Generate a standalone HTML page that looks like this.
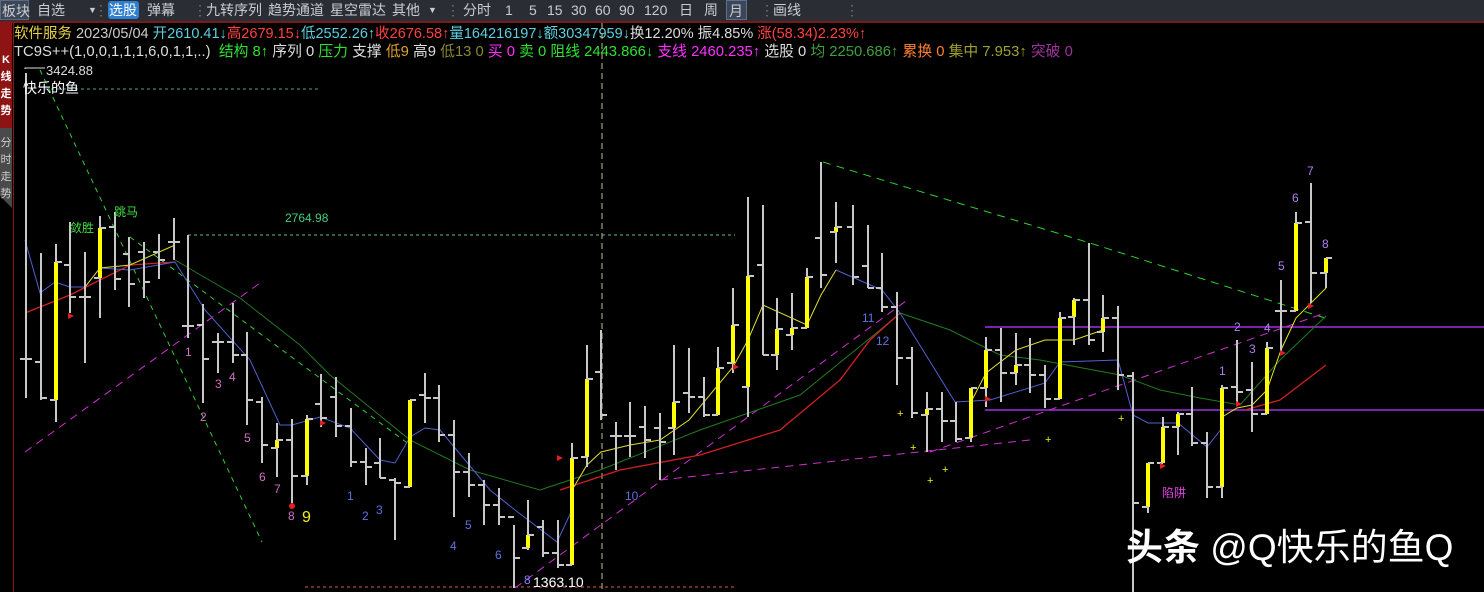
<!DOCTYPE html>
<html><head><meta charset="utf-8"><style>
*{margin:0;padding:0}
body{width:1484px;height:592px;background:#000;overflow:hidden;position:relative;font-family:"Liberation Sans","Noto Sans CJK SC",sans-serif}
#top{position:absolute;left:0;top:0;width:1484px;height:21px;background:#2a2d33;color:#c9ccd2;font-size:14px;line-height:20px}
#top span{position:absolute;top:0;white-space:nowrap}
.sep{color:#777}
#redl{position:absolute;left:0;top:21px;width:1484px;height:2px;background:#7a1a1a}
.info{position:absolute;left:14px;white-space:nowrap;line-height:17px}
svg{position:absolute;left:0;top:0}
#wm{position:absolute;left:1126px;top:526px;color:#fff;font-size:37px;white-space:nowrap;line-height:44px;font-family:"Liberation Sans","Noto Sans CJK SC",sans-serif}
</style></head><body>
<div id="top">
<span style="left:0;width:29px;height:20px;background:#3c4656;border:1px solid #5a6a80;box-sizing:border-box;padding-left:1px">板块</span>
<span style="left:37px">自选</span><span style="left:88px;font-size:9px">▼</span><span class="sep" style="left:94px">⋮</span>
<span style="left:108px;top:1px;width:30px;height:18px;background:#2f7fd0;color:#fff;border-radius:3px;line-height:18px;padding-left:1px">选股</span>
<span style="left:147px">弹幕</span><span class="sep" style="left:193px">⋮</span>
<span style="left:206px">九转序列</span><span style="left:268px">趋势通道</span><span style="left:330px">星空雷达</span><span style="left:392px">其他</span><span style="left:428px;font-size:9px">▼</span><span class="sep" style="left:446px">⋮</span>
<span style="left:463px">分时</span><span style="left:505px">1</span><span style="left:529px">5</span><span style="left:547px">15</span><span style="left:571px">30</span><span style="left:595px">60</span><span style="left:619px">90</span><span style="left:644px">120</span><span style="left:679px">日</span><span style="left:704px">周</span>
<span style="left:726px;width:21px;height:20px;background:#3c4656;border:1px solid #5a7090;box-sizing:border-box;padding-left:2px">月</span>
<span class="sep" style="left:760px">⋮</span><span style="left:773px">画线</span><span class="sep" style="left:845px">⋮</span>
</div>
<div id="redl"></div>
<div style="position:absolute;left:0;top:23px;width:12px;height:105px;background:#8e1414"></div>
<div style="position:absolute;left:0;top:128px;width:12px;height:80px;background:#4a4a4a;clip-path:polygon(0 0,100% 0,100% 100%,0 85%)"></div>
<div style="position:absolute;left:0;top:52px;width:12px;color:#fff;font-size:11px;line-height:17px;text-align:center;font-weight:bold">K<br>线<br>走<br>势</div>
<div style="position:absolute;left:0;top:135px;width:12px;color:#ccc;font-size:11px;line-height:17px;text-align:center">分<br>时<br>走<br>势</div>
<div style="position:absolute;left:13px;top:23px;width:1px;height:569px;background:#8e1414"></div>
<div class="info" style="top:26px;font-size:14.5px"><span style="color:#e8d040">软件服务</span> <span style="color:#ccc">2023/05/04</span> <span style="color:#5cd0e0">开2610.41↓</span><span style="color:#ff4040">高2679.15↓</span><span style="color:#5cd0e0">低2552.26↑</span><span style="color:#ff4040">收2676.58↑</span><span style="color:#5cd0e0">量164216197↓额30347959↓</span><span style="color:#ddd">换12.20% 振4.85% </span><span style="color:#ff4040">涨(58.34)2.23%↑</span></div>
<div class="info" style="top:44px;font-size:14.8px"><span style="color:#ddd">TC9S++(1,0,0,1,1,1,6,0,1,1,..)</span> <span style="color:#30e030">&nbsp;结构 8↑</span> <span style="color:#ddd">序列 0</span> <span style="color:#30e030">压力</span> <span style="color:#ddd">支撑</span> <span style="color:#e0a030">低9</span> <span style="color:#ddd">高9</span> <span style="color:#888830">低13 0</span> <span style="color:#ff30ff">买 0</span> <span style="color:#30e030">卖 0</span> <span style="color:#30e030">阻线 2443.866↓</span> <span style="color:#ff30ff">支线 2460.235↑</span> <span style="color:#ddd">选股 0</span> <span style="color:#40a040">均 2250.686↑</span> <span style="color:#ff8030">累换 0</span> <span style="color:#a0a030">集中 7.953↑</span> <span style="color:#a030a0">突破 0</span></div>
<svg id="ch" width="1484" height="592" xmlns="http://www.w3.org/2000/svg">
<g fill="none" stroke-width="1">
<line x1="602" y1="23" x2="602" y2="592" stroke="#c8c090" stroke-dasharray="6,4"/>
<line x1="45" y1="89" x2="320" y2="89" stroke="#4aa0a0" stroke-dasharray="3,3"/>
<line x1="188" y1="235" x2="735" y2="235" stroke="#60c080" stroke-dasharray="3,3"/>
<line x1="305" y1="587" x2="735" y2="587" stroke="#d06040" stroke-dasharray="3,3"/>
<line x1="985" y1="327" x2="1484" y2="327" stroke="#a030e0" stroke-width="1.5"/>
<line x1="985" y1="410" x2="1484" y2="410" stroke="#a030e0" stroke-width="1.5"/>
<polyline points="823,162 1090,243 1325,318" stroke="#30d030" stroke-dasharray="8,6"/>
<line x1="40" y1="70" x2="262" y2="542" stroke="#30d030" stroke-dasharray="5,5"/>
<line x1="130" y1="237" x2="410" y2="445" stroke="#30d030" stroke-dasharray="5,5"/>
<line x1="25" y1="452" x2="260" y2="283" stroke="#d030d0" stroke-dasharray="8,6"/>
<line x1="515" y1="588" x2="910" y2="298" stroke="#d030d0" stroke-dasharray="8,6"/>
<line x1="660" y1="480" x2="1030" y2="440" stroke="#d030d0" stroke-dasharray="8,6"/>
<line x1="930" y1="452" x2="1325" y2="313" stroke="#d030d0" stroke-dasharray="8,6"/>
<polyline points="175,260 240,298 300,345 330,375 410,440 470,470 540,490 600,470 700,430 800,395 880,330 900,313 950,330 1000,355 1040,360 1120,375 1160,390 1200,398 1240,405 1280,360 1326,316" stroke="#227a22"/>
<polyline points="25,313 70,295 130,265 175,262" stroke="#d02020" stroke-width="1.3"/>
<polyline points="560,490 620,470 700,455 780,430 840,380 870,340 900,313" stroke="#d02020" stroke-width="1.3"/>
<polyline points="1245,410 1280,400 1326,365" stroke="#d02020" stroke-width="1.3"/>
<polyline points="25,240 40,293 55,282 70,287 85,287 100,268 130,270 175,262 205,310 250,360 280,425 292,425 320,417 350,428 380,460 395,463 410,437 425,428 440,430 490,490 515,510 557,542 572,510" stroke="#5060d0"/>
<polyline points="836,270 882,290 900,313 955,402 990,400 1045,383 1060,362 1118,360 1133,415 1148,423 1178,423 1207,447 1222,428" stroke="#5060d0"/>
<polyline points="85,287 100,268 130,265 175,245" stroke="#e0e030"/>
<polyline points="572,490 587,465 601,452 630,445 660,440 689,420 733,367 748,340 763,305 807,325 821,295 836,270" stroke="#e0e030"/>
<polyline points="971,402 986,373 1016,350 1045,340 1074,340 1103,330" stroke="#e0e030"/>
<polyline points="1222,417 1237,408 1252,405 1267,390 1281,350 1296,318 1326,288" stroke="#e0e030"/>
<polyline points="25,69 25,68 45,68" stroke="#ddd"/>
</g>
<g id="bars"></g>
<g font-family="Liberation Sans" font-size="12">
<text x="46" y="75" fill="#ddd" font-size="13">3424.88</text>
<text x="23" y="93" fill="#fff" font-size="14" font-family="Noto Sans CJK SC">快乐的鱼</text>
<text x="285" y="222" fill="#40d080" font-size="12">2764.98</text>
<text x="533" y="587" fill="#fff" font-size="14">1363.10</text>
<text x="524" y="584" fill="#8080ff">8</text>
<text x="70" y="232" fill="#40e040" font-family="Noto Sans CJK SC">敛胜</text>
<text x="114" y="216" fill="#40e040" font-family="Noto Sans CJK SC">跳马</text>
<text x="1162" y="497" fill="#e040e0" font-family="Noto Sans CJK SC">陷阱</text>
<g fill="#d070c0"><text x="185" y="356">1</text><text x="200" y="421">2</text><text x="215" y="388">3</text><text x="229" y="381">4</text><text x="244" y="442">5</text><text x="259" y="481">6</text><text x="274" y="493">7</text><text x="288" y="520">8</text></g>
<text x="302" y="522" fill="#f0f020" font-size="16">9</text>
<g fill="#6070e0"><text x="347" y="500">1</text><text x="362" y="520">2</text><text x="376" y="514">3</text><text x="450" y="550">4</text><text x="465" y="529">5</text><text x="495" y="559">6</text><text x="625" y="500">10</text><text x="862" y="322">11</text><text x="876" y="345">12</text></g>
<g fill="#b080f0"><text x="1219" y="375">1</text><text x="1234" y="331">2</text><text x="1249" y="353">3</text><text x="1264" y="332">4</text><text x="1278" y="270">5</text><text x="1292" y="202">6</text><text x="1307" y="175">7</text><text x="1322" y="248">8</text></g>
<g fill="#f0f020" font-size="11"><text x="897" y="417">+</text><text x="910" y="451">+</text><text x="927" y="484">+</text><text x="942" y="473">+</text><text x="1045" y="443">+</text><text x="1118" y="422">+</text></g>
<circle cx="292" cy="506" r="3" fill="#e02020"/>
<g fill="#e02020"><path d="M68,313 l6,3 l-6,3z"/><path d="M320,420 l6,3 l-6,3z"/><path d="M557,455 l6,3 l-6,3z"/><path d="M733,364 l6,3 l-6,3z"/><path d="M985,396 l6,3 l-6,3z"/><path d="M1160,463 l6,3 l-6,3z"/><path d="M1236,401 l6,3 l-6,3z"/><path d="M1280,350 l6,3 l-6,3z"/><path d="M1308,303 l6,3 l-6,3z"/></g>
</g>
</svg>
<div id="wm"><b>头条</b> @Q快乐的鱼Q</div>
<script>
var B=[[26,73,398,359,359],[41,253,400,362,398],[56,244,422,400,262],[70,222,313,265,297],[85,252,363,297,297],[100,216,318,278,228],[115,212,290,227,279],[129,237,307,254,284],[144,242,298,252,282],[159,234,279,252,260],[174,218,260,242,242],[188,235,338,326,326],[203,304,403,325,359],[218,333,373,342,342],[233,303,363,342,355],[247,332,425,355,400],[262,397,463,402,445],[277,423,477,448,440],[292,419,503,440,476],[307,415,485,476,419],[321,374,427,404,418],[336,377,437,397,426],[351,408,467,426,462],[366,448,485,462,467],[380,438,478,463,478],[395,478,540,480,483],[410,400,487,487,400],[425,373,423,395,398],[439,385,442,398,435],[454,420,517,435,472],[469,453,497,472,485],[484,480,525,485,505],[499,488,525,505,517],[514,525,588,517,558],[528,500,550,548,535],[543,520,557,527,553],[558,520,568,553,565],[572,443,565,565,458],[587,345,467,457,379],[601,330,420,372,415],[616,422,470,436,436],[630,402,457,436,436],[645,406,458,427,440],[660,413,480,428,442],[674,345,455,428,402],[689,348,413,393,397],[704,377,417,397,415],[718,347,415,415,368],[733,288,373,363,325],[748,197,417,387,276],[763,205,355,265,355],[777,298,370,355,329],[792,293,350,335,328],[807,268,328,328,277],[821,162,288,238,275],[836,202,263,232,227],[853,205,285,227,277],[868,225,288,266,288],[882,253,312,288,307],[897,292,385,307,358],[912,347,418,358,413],[927,392,452,415,409],[942,392,442,409,421],[956,402,442,421,439],[971,388,442,438,388],[986,337,407,388,350],[1001,328,402,350,373],[1016,333,385,373,365],[1030,338,393,365,375],[1045,365,408,375,399],[1060,312,399,399,318],[1074,298,345,317,300],[1089,243,345,300,340],[1103,295,352,332,318],[1118,306,390,318,375],[1133,372,592,376,503],[1148,463,513,507,463],[1163,417,463,463,427],[1178,412,455,427,414],[1192,387,446,414,443],[1207,432,498,443,487],[1222,385,498,487,388],[1237,340,405,387,392],[1252,362,432,390,414],[1267,342,414,414,348],[1281,280,353,311,311],[1296,212,311,311,223],[1311,183,303,222,273],[1326,258,288,273,258]];
var s='';
B.forEach(function(b){var x=b[0],h=b[1],l=b[2],o=b[3],c=b[4];var up=c<o;
s+='<line x1="'+x+'" y1="'+h+'" x2="'+x+'" y2="'+l+'" stroke="#c8c8c8" stroke-width="2"/>';
if(up){s+='<rect x="'+(x-2)+'" y="'+c+'" width="4" height="'+Math.max(1,o-c)+'" fill="#ffff00"/>';}
s+='<line x1="'+(x-6)+'" y1="'+o+'" x2="'+x+'" y2="'+o+'" stroke="#c8c8c8" stroke-width="2"/>';
s+='<line x1="'+x+'" y1="'+c+'" x2="'+(x+6)+'" y2="'+c+'" stroke="#c8c8c8" stroke-width="2"/>';});
document.getElementById('bars').innerHTML=s;
</script>
</body></html>
